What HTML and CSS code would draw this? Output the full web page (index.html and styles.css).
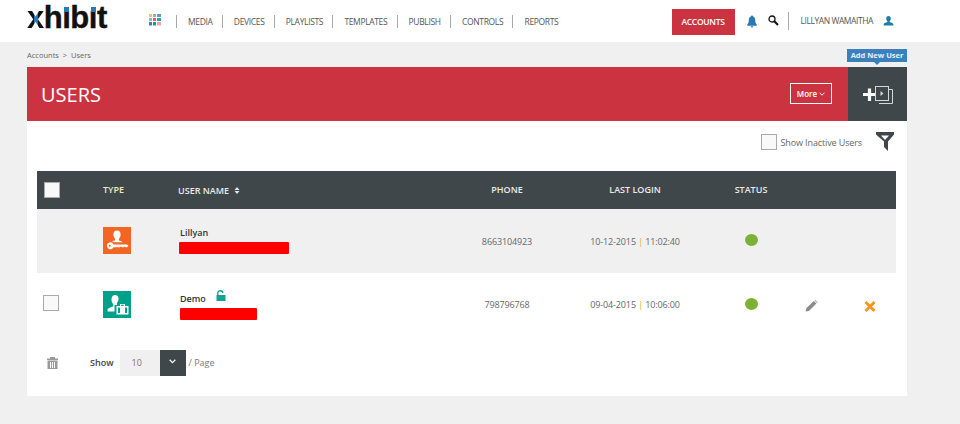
FILE: index.html
```html
<!DOCTYPE html>
<html lang="en">
<head>
<meta charset="utf-8">
<title>Users</title>
<link rel="stylesheet" href="styles.css">
</head>
<body>
<header class="topbar">
  <div class="logo"><span class="logo-x">x</span>h<span class="logo-i">ı</span>b<span class="logo-i">ı</span>t</div>
  <svg class="apps" width="12" height="12" viewBox="0 0 12 12">
    <rect x="0" y="0" width="3" height="3" fill="#f2c063"/><rect x="4" y="0" width="3" height="3" fill="#7fb2d9"/><rect x="8" y="0" width="4" height="3" fill="#5f9ccb"/>
    <rect x="0" y="4" width="3" height="3" fill="#65c6d8"/><rect x="4" y="4" width="3" height="3" fill="#f05a4f"/><rect x="8" y="4" width="4" height="3" fill="#19a8b8"/>
    <rect x="0" y="8" width="3" height="3.5" fill="#3c7fb5"/><rect x="4" y="8" width="3" height="3.5" fill="#1d9a8a"/><rect x="8" y="8" width="4" height="3.5" fill="#f4a3a3"/>
  </svg>
  <nav class="nav">
    <a class="nav-item">MEDIA</a>
    <a class="nav-item">DEVICES</a>
    <a class="nav-item">PLAYLISTS</a>
    <a class="nav-item">TEMPLATES</a>
    <a class="nav-item">PUBLISH</a>
    <a class="nav-item">CONTROLS</a>
    <a class="nav-item">REPORTS</a>
  </nav>
  <div class="top-right">
    <a class="accounts">ACCOUNTS</a>
    <svg class="bell" width="10" height="13" viewBox="0 0 10 13"><path d="M5 0.5c.7 0 1 .5 1 1 1.600.5 2.200 1.800 2.200 3.500 0 2.200.5 3.600 1.600 4.800v.9H.2v-.9C1.300 8.600 1.800 7.200 1.800 5c0-1.700.6-3 2.200-3.500 0-.5.3-1 1-1z" fill="#2a79b5"/><path d="M3.800 11.300h2.400c0 .8-.5 1.300-1.200 1.300s-1.200-.5-1.200-1.300z" fill="#2a79b5"/></svg>
    <svg class="search" width="11" height="11" viewBox="0 0 11 11"><circle cx="4" cy="4" r="3" fill="none" stroke="#111" stroke-width="1.300"/><path d="M6.300 6.300L10 10" stroke="#111" stroke-width="2"/></svg>
    <span class="user-name">LILLYAN WAMAITHA</span>
    <svg class="user-icon" width="11" height="10" viewBox="0 0 11 10"><path d="M5.500 0c1.500 0 2.300 1.100 2.300 2.500 0 1.200-.5 2.200-1.200 2.800v.8c1.600.5 3.200 1 3.700 2v1.500H.7V8.100c.5-1 2.100-1.500 3.700-2v-.8C3.700 4.700 3.200 3.700 3.200 2.500 3.200 1.100 4 0 5.500 0z" fill="#1f7ba8"/></svg>
  </div>
</header>

<main class="page">
  <div class="crumbs">
    <span>Accounts&nbsp; &gt; &nbsp;Users</span>
    <span class="tip">Add New User</span>
  </div>
  <div class="titlebar">
    <h1 class="title">USERS</h1>
    <a class="more">More <svg width="6" height="4" viewBox="0 0 6 4"><path d="M.5.700L3 3.200 5.500.700" fill="none" stroke="#fff" stroke-width="1"/></svg></a>
    <a class="add">
      <svg width="32" height="20" viewBox="0 0 32 20">
        <path d="M1 9.500h13M7.500 3.500v12.500" stroke="#fff" stroke-width="3.200" fill="none"/>
        <rect x="13.500" y="1.500" width="13" height="14" fill="#3f474a" stroke="#d5d8d9" stroke-width="1"/>
        <path d="M17 18.500h13.500V4.500h-4" fill="none" stroke="#d5d8d9" stroke-width="1"/>
        <path d="M18.500 6l3 2.500-3 2.500z" fill="#d5d8d9"/>
      </svg>
    </a>
  </div>
  <section class="card">
    <div class="tools">
      <span class="box"></span>
      <span class="inactive">Show Inactive Users</span>
      <svg class="filter" width="18" height="19" viewBox="0 0 18 19"><path d="M0 0h18v2.500l-6 7V19l-4-4V9.500L0 2.500z" fill="#3f474a"/><path d="M5 3.500h8L9 8z" fill="#fff"/></svg>
    </div>
    <div class="row head">
      <span class="box box-head"></span>
      <span class="h-type">TYPE</span>
      <span class="h-name">USER NAME <svg width="6" height="7" viewBox="0 0 6 7"><path d="M3 0l2.500 3H.5zM3 7L.5 4h5z" fill="#e4e6e6"/></svg></span>
      <span class="center">PHONE</span>
      <span class="center">LAST LOGIN</span>
      <span class="center">STATUS</span>
      <span></span>
      <span></span>
    </div>
    <div class="row body shaded">
      <span></span>
      <span class="badge orange">
        <svg width="28" height="27" viewBox="0 0 28 27"><path d="M14 3.500c2.300 0 3.600 1.700 3.600 3.900 0 1.800-.7 3.400-1.700 4.300v1.800c1.500.4 3 1 3.900 1.800h-8.600c-.6-.6-1.500-1-2.600-1.100.9-.4 2.300-.6 3.500-.8v-1.700c-1-.9-1.700-2.500-1.700-4.300 0-2.200 1.300-3.900 3.600-3.900z" fill="#fff"/><path d="M4 18.800a3.400 3.400 0 0 1 6.500-1.400H24l1.500 1.400L24 20.200h-1.500l-1-.8-1 .8H19l-1-.8-1 .8h-6.500A3.400 3.400 0 0 1 4 18.800zm1.800 0a1 1 0 1 0 2 0 1 1 0 0 0-2 0z" fill="#fff" fill-rule="evenodd"/></svg>
      </span>
      <span class="user"><b class="uname">Lillyan</b><i class="redact r1"></i></span>
      <span class="center cell">8663104923</span>
      <span class="center cell">10-12-2015 <em>|</em> 11:02:40</span>
      <span class="center"><i class="dot"></i></span>
      <span></span>
      <span></span>
    </div>
    <div class="row body row-two">
      <span class="box box-row"></span>
      <span class="badge teal">
        <svg width="28" height="27" viewBox="0 0 28 27"><path d="M12 4c2.200 0 3.500 1.600 3.500 3.800 0 1.800-.7 3.300-1.700 4.100v1.800l.6.300h-2.900v6.500H4.500v-2c.6-1.500 3.300-2.500 5.700-3.100v-2.500c-1-.8-1.700-2.300-1.700-4.100C8.500 5.600 9.800 4 12 4z" fill="#fff"/><path d="M13.500 15h3.500v-2h5v2h3.500v8.500h-12z" fill="#fff"/><path d="M18.300 13.800h2.400V15h-2.400zM15 16.500h2v5.500h-2zM22 16.500h2v5.500h-2z" fill="#00a08a"/></svg>
      </span>
      <span class="user"><b class="uname">Demo <svg class="lock" width="10" height="11" viewBox="0 0 10 11"><path d="M1.800 5V2.900C1.800 1.400 3 .7 4.300.7s2.500.7 2.500 2.200" fill="none" stroke="#16a093" stroke-width="1.400"/><rect x="0.500" y="5" width="9" height="6" fill="#16a093"/></svg></b><i class="redact r2"></i></span>
      <span class="center cell">798796768</span>
      <span class="center cell">09-04-2015 <em>|</em> 10:06:00</span>
      <span class="center"><i class="dot"></i></span>
      <span class="center action"><svg width="13" height="12" viewBox="0 0 13 12"><path d="M0.500 11.500l.8-3.200L8.800 1l2.600 2.600L4 11zM9.600.4l.6-.4 2.500 2.500-.6.600z" fill="#8d8d8d"/></svg></span>
      <span class="center action"><svg width="12" height="11" viewBox="0 0 12 11"><path d="M1.500 1l9 9M10.500 1l-9 9" stroke="#f7941e" stroke-width="2.800"/></svg></span>
    </div>
    <div class="foot">
      <svg class="trash" width="11" height="12" viewBox="0 0 11 12"><path d="M3 0h5v1.500h3V3H0V1.500h3z" fill="#9a9a9a"/><path d="M.5 3.500h10V12H.5zM3 5v6h1V5zM5 5v6h1V5zM7 5v6h1V5z" fill="#9a9a9a" fill-rule="evenodd"/></svg>
      <span class="show">Show</span>
      <span class="select"><span class="select-val">10</span><span class="select-btn"><svg width="7" height="5" viewBox="0 0 7 5"><path d="M.7.800L3.500 3.600 6.300.800" fill="none" stroke="#fff" stroke-width="1.300"/></svg></span></span>
      <span class="perpage">/ Page</span>
    </div>
  </section>
</main>
</body>
</html>
```

FILE: styles.css
```css
* { box-sizing: border-box; }
html, body { margin: 0; padding: 0; }
body {
  background: #f0f0f0;
  font-family: "Open Sans", "Liberation Sans", sans-serif;
  color: #555;
  height: 424px;
  overflow: hidden;
}
h1, p { margin: 0; }
i, em { font-style: normal; }

.topbar {
  height: 42px;
  background: #fff;
  display: flex;
  align-items: center;
  padding-left: 27px;
}
.logo {
  width: 122px;
  font-family: "Liberation Sans", sans-serif;
  font-weight: 700;
  font-size: 31px;
  line-height: 42px;
  letter-spacing: -0.5px;
  color: #111;
  margin-top: -6px;
  -webkit-text-stroke: 0.4px #111;
}
.logo-x {
  background: linear-gradient(90deg, #111 0 40%, #2a79b5 40% 65%, #111 65%);
  -webkit-background-clip: text;
  background-clip: text;
  color: transparent;
  -webkit-text-stroke: 0;
}
.logo-i { position: relative; }
.logo-i::before {
  content: "";
  position: absolute;
  left: 2px;
  top: 7px;
  width: 5px;
  height: 5px;
  background: #2a79b5;
}
.apps { flex: none; margin-top: -2px; margin-right: 15px; }
.nav { display: flex; align-items: center; }
.nav-item {
  font-size: 8.500px;
  letter-spacing: -0.35px;
  line-height: 13px;
  padding: 0 9.300px 0 11px;
  border-left: 1px solid #a8abad;
  color: #555;
}
.top-right { margin-left: auto; display: flex; align-items: center; height: 42px; padding-right: 66px; }
.accounts {
  width: 63px;
  height: 26px;
  margin-top: 2px;
  background: #cc3340;
  color: #fff;
  font-size: 8.500px;
  letter-spacing: -0.3px;
  font-weight: 600;
  line-height: 26px;
  text-align: center;
}
.bell { margin-left: 12px; }
.search { margin-left: 11px; margin-right: 9px; margin-top: -1px; }
.user-name {
  border-left: 1px solid #a8abad;
  padding-left: 12px;
  line-height: 18px;
  font-size: 8.500px;
  letter-spacing: -0.43px;
  color: #555;
  white-space: nowrap;
}
.user-icon { margin-left: 10px; }

.page { width: 880px; margin-left: 27px; }
.crumbs {
  height: 25px;
  display: flex;
  justify-content: space-between;
  font-size: 7.500px;
  line-height: 26px;
  color: #666;
  position: relative;
}
.tip {
  position: absolute;
  right: 0;
  top: 7px;
  width: 60px;
  height: 13px;
  background: #3a81bb;
  color: #e8f0f7;
  font-size: 7.500px;
  font-weight: 700;
  line-height: 13px;
  text-align: center;
}
.tip::after {
  content: "";
  position: absolute;
  left: 27px;
  top: 13px;
  border: 3px solid transparent;
  border-top-color: #3a81bb;
  border-bottom-width: 0;
}
.titlebar {
  height: 54px;
  background: #cc3340;
  display: flex;
  align-items: center;
}
.title {
  margin-left: 14px;
  font-size: 20px;
  font-weight: 400;
  color: #fff;
}
.more {
  margin-left: auto;
  margin-right: 16px;
  width: 42px;
  height: 21px;
  margin-top: -1px;
  border: 1px solid #fff;
  color: #fff;
  font-size: 8px;
  font-weight: 600;
  line-height: 19px;
  text-align: center;
}
.more svg { vertical-align: 1px; }
.add {
  width: 59px;
  height: 54px;
  background: #3f474a;
  display: flex;
  align-items: center;
  justify-content: center;
  padding-top: 1px;
}
.card { background: #fff; height: 275px; padding: 0 11px 0 10px; }
.tools {
  height: 50px;
  display: flex;
  align-items: center;
  justify-content: flex-end;
  padding: 0 2px 8px 0;
}
.box {
  display: block;
  width: 16px;
  height: 16px;
  border: 1px solid #aaa;
  background: #f9f9f9;
}
.inactive { margin-left: 4px; font-size: 9px; letter-spacing: -0.12px; color: #666; }
.filter { margin-left: 14px; margin-top: -2px; }

.row {
  display: grid;
  grid-template-columns: 66px 75px 289px 80px 176px 56px 65px 52px;
  align-items: center;
}
.center { text-align: center; display: block; }
.head {
  height: 38px;
  background: #3f474a;
  color: #e9ebeb;
  font-size: 9px;
  font-weight: 600;
}
.h-type { color: #efe9c5; margin-top: -2px; }
.h-name { white-space: nowrap; }
.h-name svg { margin-left: 3px; vertical-align: 0; }
.head .center { margin-top: -2px; }
.box-head { margin-left: 7px; margin-top: -1px; }
.box-row { margin-left: 6px; margin-top: -4px; }
.body { height: 64px; }
.shaded { background: #f0f0f0; }
.badge { display: block; width: 28px; height: 27px; margin-top: -1px; }
.badge svg { display: block; }
.orange { background: #f26522; }
.teal { background: #00a08a; margin-top: -1px; }
.user { display: block; padding-left: 1px; margin-top: -1px; }
.uname { display: block; margin-left: 1px; font-size: 9px; font-weight: 600; color: #333; line-height: 12px; }
.lock { margin-left: 8px; vertical-align: 1px; }
.redact { display: block; height: 12px; background: #f00; border-radius: 1px; margin-top: 3px; }
.r1 { width: 110px; }
.r2 { width: 77px; margin-left: 1px; }
.cell { font-size: 9px; letter-spacing: -0.12px; color: #666; }
.cell em { color: #f0a830; }
.row-two .cell { margin-top: -1px; }
.dot {
  display: block;
  margin: -2px auto 0;
  width: 13px;
  height: 12px;
  border-radius: 50%;
  background: #7cb135;
}
.row-two .dot { margin-top: -3px; }
.action { margin-top: 2px; }
.foot { display: flex; align-items: center; height: 26px; margin-top: 13px; }
.trash { margin-left: 10px; }
.show { margin-left: 32px; font-size: 9px; font-weight: 600; color: #444; margin-top: -1px; }
.select { display: flex; margin-left: 6px; height: 26px; }
.select-val {
  width: 40px;
  background: #f0f0f0;
  color: #8a6d72;
  font-size: 9px;
  line-height: 26px;
  padding-left: 12px;
}
.select-btn {
  width: 26px;
  background: #3f474a;
  display: flex;
  align-items: center;
  justify-content: center;
  padding-bottom: 3px;
}
.perpage { margin-left: 3px; font-size: 9px; color: #777; margin-top: -1px; }
```
